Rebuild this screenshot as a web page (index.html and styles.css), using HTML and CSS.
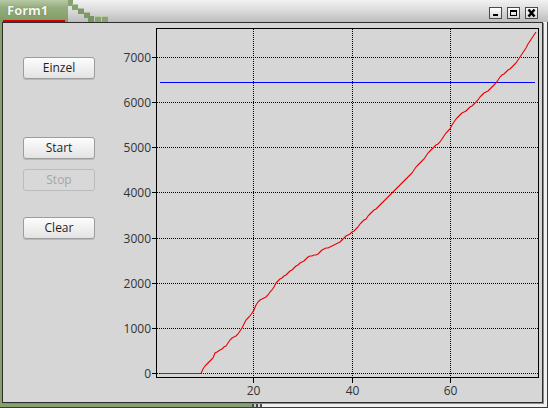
FILE: index.html
```html
<!DOCTYPE html>
<html>
<head>
<meta charset="utf-8">
<link rel="stylesheet" href="styles.css">
</head>
<body>
<div class="window">
  <div class="titlebar">
    <div class="tab"><span class="title">Form1</span></div>
    <svg class="steps" width="44" height="22" viewBox="68 0 44 22">
      <rect x="68" y="0" width="5" height="6" fill="#86a06e"/>
      <rect x="72" y="4" width="6" height="6" fill="#86a06e"/>
      <rect x="72" y="4" width="6" height="1" fill="#b5c6a3"/>
      <rect x="78" y="8" width="6" height="6" fill="#7d9866"/>
      <rect x="78" y="8" width="6" height="1" fill="#b0c29e"/>
      <rect x="84" y="12" width="6" height="6" fill="#7d9866"/>
      <rect x="84" y="12" width="6" height="1" fill="#aabd97"/>
      <rect x="88" y="16" width="6" height="6" fill="#789462"/>
      <rect x="95" y="16" width="6" height="6" fill="#8aa374"/>
      <rect x="95" y="16" width="6" height="1" fill="#b9c9a8"/>
      <rect x="102" y="16" width="6" height="6" fill="#8aa374"/>
      <rect x="102" y="16" width="6" height="1" fill="#b9c9a8"/>
    </svg>
    <div class="spacer"></div>
    <div class="tbtns">
      <div class="tbtn"><svg width="11" height="10" viewBox="0 0 11 10"><rect x="3" y="6" width="5" height="2" fill="#000"/></svg></div>
      <div class="tbtn"><svg width="11" height="10" viewBox="0 0 11 10"><rect x="2.5" y="2.5" width="6" height="5" fill="none" stroke="#000"/><rect x="2" y="2" width="7" height="2" fill="#000"/></svg></div>
      <div class="tbtn"><svg width="11" height="10" viewBox="0 0 11 10"><path d="M2.5 1.5 L8.5 8.5 M8.5 1.5 L2.5 8.5" stroke="#000" stroke-width="2.6"/></svg></div>
    </div>
  </div>
  <div class="body">
    <div class="client">
      <div class="buttons">
        <button class="btn einzel">Einzel</button>
        <button class="btn start">Start</button>
        <button class="btn stop" disabled>Stop</button>
        <button class="btn clear">Clear</button>
      </div>
      <svg class="chart" width="438" height="378" viewBox="103 23 438 378">
        <g class="grid" stroke="#000" stroke-width="1" stroke-dasharray="1 1" shape-rendering="crispEdges">
          <line x1="157" y1="57.5" x2="538" y2="57.5"/>
          <line x1="157" y1="102.5" x2="538" y2="102.5"/>
          <line x1="157" y1="147.5" x2="538" y2="147.5"/>
          <line x1="157" y1="192.5" x2="538" y2="192.5"/>
          <line x1="157" y1="238.5" x2="538" y2="238.5"/>
          <line x1="157" y1="283.5" x2="538" y2="283.5"/>
          <line x1="157" y1="328.5" x2="538" y2="328.5"/>
          <line x1="157" y1="373.5" x2="538" y2="373.5"/>
          <line x1="253.5" y1="29" x2="253.5" y2="377"/>
          <line x1="352.5" y1="29" x2="352.5" y2="377"/>
          <line x1="450.5" y1="29" x2="450.5" y2="377"/>
        </g>
        <g stroke="#000" stroke-width="1" shape-rendering="crispEdges">
          <rect x="156.5" y="28.5" width="382" height="349" fill="none"/>
          <line x1="152" y1="57.5" x2="156" y2="57.5"/>
          <line x1="152" y1="102.5" x2="156" y2="102.5"/>
          <line x1="152" y1="147.5" x2="156" y2="147.5"/>
          <line x1="152" y1="192.5" x2="156" y2="192.5"/>
          <line x1="152" y1="238.5" x2="156" y2="238.5"/>
          <line x1="152" y1="283.5" x2="156" y2="283.5"/>
          <line x1="152" y1="328.5" x2="156" y2="328.5"/>
          <line x1="152" y1="373.5" x2="156" y2="373.5"/>
          <line x1="253.5" y1="378" x2="253.5" y2="383"/>
          <line x1="352.5" y1="378" x2="352.5" y2="383"/>
          <line x1="450.5" y1="378" x2="450.5" y2="383"/>
        </g>
        <g class="ylabels">
          <text x="151" y="62">7000</text>
          <text x="151" y="107">6000</text>
          <text x="151" y="152">5000</text>
          <text x="151" y="197">4000</text>
          <text x="151" y="243">3000</text>
          <text x="151" y="288">2000</text>
          <text x="151" y="333">1000</text>
          <text x="151" y="378">0</text>
        </g>
        <g class="xlabels">
          <text x="253.5" y="395">20</text>
          <text x="352.5" y="395">40</text>
          <text x="450.5" y="395">60</text>
        </g>
        <line x1="160" y1="82.5" x2="535" y2="82.5" stroke="#0000ff" stroke-width="1" shape-rendering="crispEdges"/>
        <polyline fill="none" stroke="#ee0000" stroke-width="1.1" points="160,373.5 201,373.5 203,369 205,366 207,364 209,362 211,360 213,358 215,353 217,352 220,350 222,349 224,347 226,346 228,343 230,340 232,338 234,337 236,336 238,334 240,331 242,328 244,324 246,320 248,318 250,316 252,313 254,310 256,305 258,302 260,300 262,299 264,298 266,297 268,295 270,292 272,290 274,287 276,283 278,281 280,279 282,278 284,276 286,275 288,273 290,271 292,270 294,268 296,266 298,265 300,263 302,262 304,261 306,259 308,257 310,256 312,256 314,255 316,255 318,254 320,252 322,250 324,249 326,248 328,248 330,247 332,246 334,245 336,244 338,243 340,242 342,240 344,238 346,236 348,235 350,234 352,232 354,231 356,229 358,227 360,224 362,222 364,220 366,219 368,216 370,214 372,212 374,210 376,209 378,207 380,205 382,203 384,201 386,199 388,197 390,195 392,193 394,191 396,189 398,187 400,185 402,183 404,181 406,179 408,177 410,175 412,173 414,170 416,167 418,165 420,163 422,161 424,159 426,156 428,153 430,151 432,149 434,147 436,145 438,144 440,142 442,139 444,136 446,133 448,131 450,129 452,125 454,122 456,119 458,117 460,115 462,113 464,112 466,111 468,109 470,107 472,106 474,104 476,102 478,100 480,97 482,95 484,93 486,92 488,91 490,89 492,87 494,85 496,83 498,80 500,77 502,75 504,74 506,72 508,70 510,69 512,67 514,65 516,63 518,60 520,57 522,54 524,51 526,48 528,44 530,41 532,38 534,35 536,32"/>
      </svg>
    </div>
  </div>
</div>
</body>
</html>
```

FILE: styles.css
```css
html, body {
  margin: 0;
  padding: 0;
  background: #d6d6d6;
}

.window {
  width: 548px;
  height: 408px;
  display: flex;
  flex-direction: column;
  overflow: hidden;
}

.titlebar {
  height: 22px;
  display: flex;
  align-items: stretch;
  background: linear-gradient(180deg, #f2f2f2 0%, #dcdcdc 45%, #bdbdbd 100%);
  flex: none;
}

.tab {
  width: 68px;
  height: 22px;
  box-sizing: border-box;
  background: linear-gradient(180deg, #b9caa6 0%, #94ad7c 35%, #7f9b67 100%);
  position: relative;
  flex: none;
}

.tab::after {
  content: "";
  position: absolute;
  left: 3px;
  right: 3px;
  bottom: 0;
  height: 2px;
  background: #d00000;
}

.title {
  display: block;
  padding: 2px 0 0 7px;
  font-family: "Open Sans", "DejaVu Sans", sans-serif;
  font-weight: 700;
  font-size: 13px;
  line-height: 16px;
  color: #f6f9f0;
  text-shadow: 0 0 1px rgba(60, 80, 40, 0.7);
}

.steps {
  display: block;
  flex: none;
}

.spacer {
  flex: 1;
}

.tbtns {
  display: flex;
  gap: 5px;
  padding: 7px 10px 0 0;
}

.tbtn {
  width: 13px;
  height: 12px;
  box-sizing: border-box;
  border: 1px solid #4a4a4a;
  background: linear-gradient(180deg, #ffffff 0%, #d8d8d8 100%);
  display: flex;
  align-items: center;
  justify-content: center;
}

.tbtn svg {
  display: block;
}

.body {
  flex: 1;
  display: flex;
  padding: 0 4px 4px 2px;
  border-right: 1px solid #3a3a3a;
  border-bottom: 1px solid #3a3a3a;
  background:
    linear-gradient(90deg, #86a06e 0 252px, #4a4a4a 252px 254px, #c8c8c8 254px 256px, #4a4a4a 256px 258px, #d8d8d8 258px 260px, #4a4a4a 260px 262px, #f0f0f0 262px);
}

.client {
  flex: 1;
  display: flex;
  border: 1px solid #2e2e2e;
  background: #d6d6d6;
  box-shadow: 1px 1px 0 #8a8a8a;
}

.buttons {
  width: 100px;
  flex: none;
  display: flex;
  flex-direction: column;
  align-items: flex-start;
  padding: 34px 0 0 20px;
  box-sizing: border-box;
}

.btn {
  width: 72px;
  height: 22px;
  box-sizing: border-box;
  margin: 0;
  padding: 0;
  border: 1px solid #9c9c9c;
  border-radius: 3px;
  background: linear-gradient(180deg, #fcfcfc 0%, #eeeeee 60%, #e2e2e2 100%);
  box-shadow: 0 1px 0 #b8b8b8;
  font-family: "Open Sans", "DejaVu Sans", sans-serif;
  font-size: 12px;
  line-height: 18px;
  color: #1e1e1e;
}

.start {
  margin-top: 58px;
}

.stop {
  margin-top: 10px;
  background: #d8d8d8;
  border-color: #bcbcbc;
  box-shadow: none;
  color: #a6a6a6;
}

.clear {
  margin-top: 26px;
}

.chart {
  display: block;
  flex: none;
}

.ylabels text {
  font-family: "Open Sans", "DejaVu Sans", sans-serif;
  font-size: 12px;
  fill: #333;
  text-anchor: end;
}

.xlabels text {
  font-family: "Open Sans", "DejaVu Sans", sans-serif;
  font-size: 12px;
  fill: #333;
  text-anchor: middle;
}
```
